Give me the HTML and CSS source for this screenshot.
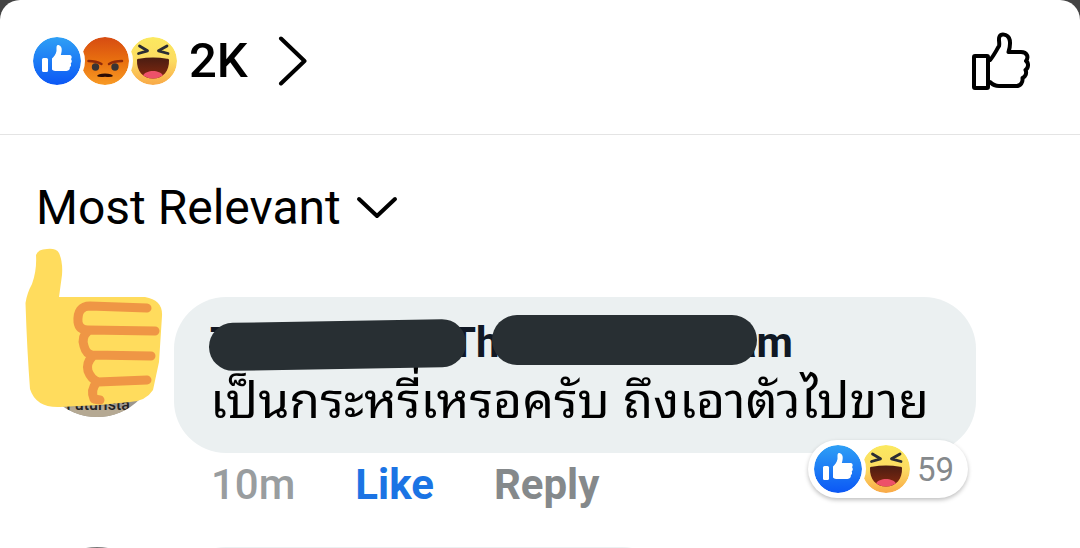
FILE: index.html
```html
<!DOCTYPE html>
<html lang="th">
  <head>
    <meta charset="UTF-8" />
    <meta name="viewport" content="width=device-width, initial-scale=1.0" />
    <title>Comments</title>
    <link rel="stylesheet" href="styles.css">
  </head>
  <body>
    <!-- shared reaction icons -->
    <svg class="defs" width="0" height="0" aria-hidden="true">
      <defs>
        <linearGradient id="blue" x1="0" y1="0" x2="0" y2="1">
          <stop offset="0" stop-color="#2fa0f5" />
          <stop offset="1" stop-color="#0b57f5" />
        </linearGradient>
        <linearGradient id="orange" x1="0" y1="0" x2="0" y2="1">
          <stop offset="0" stop-color="#d64b12" />
          <stop offset="0.5" stop-color="#e9700f" />
          <stop offset="1" stop-color="#f89a25" />
        </linearGradient>
        <linearGradient id="yellow" x1="0" y1="0" x2="0" y2="1">
          <stop offset="0" stop-color="#fbe95f" />
          <stop offset="0.5" stop-color="#fcdb62" />
          <stop offset="1" stop-color="#f9a947" />
        </linearGradient>
        <linearGradient id="mouth" x1="0" y1="0" x2="0" y2="1">
          <stop offset="0" stop-color="#4a1d12" />
          <stop offset="1" stop-color="#86290f" />
        </linearGradient>
      </defs>
      <symbol id="icon-like" viewBox="0 0 48 48">
        <circle cx="24" cy="24" r="24" fill="url(#blue)" />
        <rect x="9" y="21" width="6" height="14" rx="1.5" fill="#fff" />
        <path d="M19 21.500C21 20 23 17 23.500 14V10.500C23.500 8 25 8 26 8.200C29 9 29.500 13 27.800 18H36.500C38.500 18 39.400 20.500 38 22C39.200 23.500 39 25.500 37.700 26.500C38.500 28 38 29.500 36.800 30.300C37.200 32 36 34 33.500 34H24C21.500 34 20 33.500 19 32.500Z" fill="#fff" />
      </symbol>
      <symbol id="icon-angry" viewBox="0 0 48 48">
        <circle cx="24" cy="24" r="24" fill="url(#orange)" />
        <ellipse cx="14.500" cy="30" rx="3.700" ry="3.700" fill="#3a3434" />
        <ellipse cx="34" cy="30" rx="3.700" ry="3.700" fill="#3a3434" />
        <path d="M7.500 24Q15 24 20.500 27M41 24Q33 24 28 27" fill="none" stroke="#8f2a0a" stroke-width="2.500" stroke-linecap="round" />
        <path d="M16 39Q17 36.500 24 36.500T32 39Q31 40.500 24 39.800Q17.500 40.500 16 39Z" fill="#2b0b05" />
      </symbol>
      <symbol id="icon-haha" viewBox="0 0 48 48">
        <circle cx="24" cy="24" r="24" fill="url(#yellow)" />
        <path d="M10.500 9L18.500 13.800L9.500 16.500M38 9L29.500 13.800L39 16.500" fill="none" stroke="#2b2d34" stroke-width="2.800" stroke-linecap="round" stroke-linejoin="round" />
        <path d="M8 23Q8 21.500 10 21.700Q24 19.500 38 21.700Q40 21.500 40 23C40.500 34 34 41.500 24 41.500S7.500 34 8 23Z" fill="url(#mouth)" />
        <path d="M14 38.500C17 32.500 31 32.500 34 38.500Q29 41.500 24 41.500T14 38.500Z" fill="#ed5169" />
      </symbol>
    </svg>

    <main class="sheet">
      <header class="summary">
        <a class="summary-link" href="#reactions">
          <span class="reactions">
            <svg class="reaction"><use href="#icon-like" /></svg>
            <svg class="reaction"><use href="#icon-angry" /></svg>
            <svg class="reaction"><use href="#icon-haha" /></svg>
          </span>
          <span class="total">2K</span>
          <svg class="arrow" viewBox="0 0 30 50"><path d="M3 2.500L26.500 25L3 47.500" /></svg>
        </a>
        <button class="like-button" aria-label="Like">
          <svg viewBox="970 30 62 62">
            <rect x="974" y="56" width="14" height="32" rx="1" />
            <path d="M990 60C993 57 996 51 999 46C1000 43 998 39 999.500 36.500C1001 33.500 1007 34 1009 38C1011 42 1010 47 1008.500 52H1021C1027 52 1029 57 1026 61C1029 63 1028.500 68 1025.500 70C1027 73 1025.500 77 1022.500 78C1023 82 1021 86 1016 86H999C995 86 992 84 990 82" />
          </svg>
        </button>
      </header>

      <button class="filter">
        Most Relevant
        <svg viewBox="0 0 42 24"><path d="M3 3L21 20L39 3" /></svg>
      </button>

      <article class="comment">
        <div class="avatar">
          <svg class="photo" viewBox="0 0 120 120">
            <rect width="120" height="120" fill="#9b968e" />
            <path d="M20 112Q60 106 100 112V120H20Z" fill="#b5a993" />
            <text x="61" y="113" text-anchor="middle">Futurista</text>
          </svg>
          <svg class="sticker" viewBox="25 248 140 162">
            <path class="hand" d="M36 255Q38 249 47 249Q56 248 59 253Q63 262 62 275L59 297L145 297Q163 300 162 316L159 362L153 390Q146 401 130 402L100 405L60 407Q36 408 30 389Q27 350 25.500 303Q27 293 32 284Q37 270 36 255Z" />
            <path class="fingers" d="M147 308L90 306Q77 306 78 322Q79 330 88 330L155 331M88 331Q81 337 84 346Q86 354 92 355L151 356M92 357Q86 363 88 371Q91 379 98 382L147 380M97 382Q90 390 94 399L100 400" />
          </svg>
        </div>
        <div class="content">
          <div class="bubble">
            <div class="name">
              <span class="first">T</span><span class="middle">Th</span><span>am</span>
              <i class="marker marker-first"></i>
              <i class="marker marker-last"></i>
            </div>
            <p class="text">เป็นกระหรี่เหรอครับ ถึงเอาตัวไปขาย</p>
            <a class="pill" href="#comment-reactions">
              <span class="reactions">
                <svg class="reaction"><use href="#icon-like" /></svg>
                <svg class="reaction"><use href="#icon-haha" /></svg>
              </span>
              59
            </a>
          </div>
          <div class="actions">
            <time>10m</time>
            <button class="liked">Like</button>
            <button>Reply</button>
          </div>
        </div>
      </article>

      <!-- next comment in the list -->
      <article class="comment">
        <div class="avatar next"></div>
        <div class="content"><div class="bubble short"></div></div>
      </article>
    </main>
  </body>
</html>
```
FILE: styles.css
```css
* {
  box-sizing: border-box;
}

body {
  margin: 0;
  font-family: Roboto, sans-serif;
  background-color: #444;
  color: #000;
}

a {
  color: inherit;
  text-decoration: none;
}

button {
  padding: 0;
  border: none;
  background: none;
  font: inherit;
  color: inherit;
  cursor: pointer;
}

.defs {
  position: absolute;
}

.sheet {
  height: 100vh;
  overflow: hidden;
  background-color: #fff;
  border-radius: 20px 20px 0 0;
}

/* reactions summary */
.summary {
  display: flex;
  align-items: center;
  justify-content: space-between;
  padding: 30px 48px 42px 33px;
  border-bottom: 1px solid #e4e4e4;
}

.summary-link,
.reactions {
  display: flex;
  align-items: center;
}

.reaction {
  position: relative;
  width: 48px;
  height: 48px;
  border-radius: 50%;
  box-shadow: 0 0 0 4px #fff;
}

.reaction:nth-child(1) {
  z-index: 3;
}

.reaction:nth-child(2) {
  z-index: 2;
}

.total {
  margin: 0 30px 0 12px;
  font-size: 49px;
  font-weight: 500;
  line-height: 56px;
}

.arrow {
  width: 30px;
  height: 50px;
}

.arrow path,
.filter path,
.like-button svg {
  fill: none;
  stroke: #000;
  stroke-width: 4;
  stroke-linecap: round;
  stroke-linejoin: round;
}

.like-button,
.like-button svg {
  display: block;
  width: 62px;
  height: 62px;
}

/* sort order */
.filter {
  display: flex;
  align-items: center;
  gap: 15px;
  margin: 45px 36px 61px;
  font-size: 48px;
  line-height: 56px;
}

.filter svg {
  width: 42px;
  height: 24px;
}

/* comment */
.comment {
  display: flex;
  gap: 17px;
  padding: 0 104px 0 37px;
  margin-bottom: 34px;
}

.avatar {
  position: relative;
  flex: none;
  width: 120px;
  height: 120px;
}

.photo {
  width: 120px;
  height: 120px;
  border-radius: 50%;
}

.photo text {
  font-size: 16px;
  font-weight: 500;
  fill: #222;
}

.sticker {
  position: absolute;
  left: -12px;
  top: -49px;
  width: 140px;
  height: 162px;
}

.hand {
  fill: #ffdc5d;
}

.fingers {
  fill: none;
  stroke: #ef9645;
  stroke-width: 9;
  stroke-linecap: round;
  stroke-linejoin: round;
}

.content {
  flex: 1;
}

.bubble {
  position: relative;
  padding: 18px 36px 32px;
  border-radius: 52px;
  background-color: #ebf0f1;
}

.name {
  position: relative;
  display: flex;
  font-size: 42px;
  font-weight: 700;
  line-height: 56px;
  color: #101824;
}

.first {
  width: 240px;
}

.middle {
  width: 284px;
}

.marker {
  position: absolute;
  height: 50px;
  border-radius: 25px;
  background-color: #282f33;
}

.marker-first {
  left: -1px;
  top: 6px;
  width: 257px;
  height: 48px;
  transform: rotate(-1deg);
}

.marker-last {
  left: 282px;
  top: 0;
  width: 265px;
}

.text {
  margin: 0;
  font-family: "Noto Sans Thai Looped", "Droid Sans Thai", Loma, Garuda, Waree, "Noto Sans Thai", sans-serif;
  font-size: 50px;
  line-height: 50px;
  white-space: nowrap;
}

.pill {
  position: absolute;
  right: 8px;
  bottom: -45px;
  display: flex;
  align-items: center;
  gap: 7px;
  padding: 5px 14px 5px 6px;
  border-radius: 29px;
  background-color: #fff;
  box-shadow: 0 2px 4px rgba(0, 0, 0, 0.25);
  font-size: 33px;
  color: #85898c;
}

.actions {
  display: flex;
  gap: 60px;
  padding: 4px 37px 0;
  font-size: 42px;
  line-height: 56px;
  color: #999d9f;
}

.actions time {
  font-weight: 500;
}

.actions button {
  font-weight: 700;
  color: #85898b;
}

.actions .liked {
  color: #1b74e4;
}

.next {
  border-radius: 50%;
  background-color: #777;
}

.short {
  width: 500px;
  height: 156px;
}
```
